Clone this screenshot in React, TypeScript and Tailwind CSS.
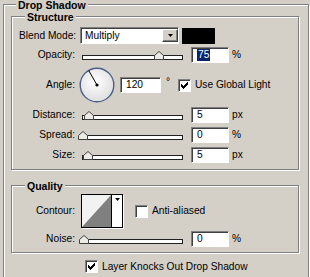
import React from 'react';

const etched = 'border border-[#808080] shadow-[inset_1px_1px_0_#fff,1px_1px_0_#fff]';
const sunken =
  'border border-t-[#808080] border-l-[#808080] border-r-white border-b-white shadow-[inset_1px_1px_0_#404040]';

const Legend = ({ text, ml }: { text: string; ml: string }) => (
  <div className="flex h-[6px]">
    <span className={`-mt-[6px] h-[12px] bg-[#d4d0c8] px-[2px] text-[10.5px] font-bold leading-[12px] ${ml}`}>
      {text}
    </span>
  </div>
);

const Arrow = () => (
  <svg width="5" height="3" viewBox="0 0 5 3">
    <path d="M0 0h5L2.5 3z" fill="#000" />
  </svg>
);

const CheckBox = ({ on }: { on?: boolean }) => (
  <span className={`flex h-[13px] w-[13px] shrink-0 items-center justify-center bg-white ${sunken}`}>
    {on && (
      <svg width="7" height="7" viewBox="0 0 7 7">
        <rect x="6" y="0" width="1" height="1" />
        <rect x="5" y="1" width="2" height="1" />
        <rect x="0" y="2" width="1" height="1" />
        <rect x="4" y="2" width="3" height="1" />
        <rect x="0" y="3" width="2" height="1" />
        <rect x="3" y="3" width="3" height="1" />
        <rect x="0" y="4" width="5" height="1" />
        <rect x="1" y="5" width="3" height="1" />
        <rect x="2" y="6" width="1" height="1" />
      </svg>
    )}
  </span>
);

const Slider = ({ at }: { at: number }) => (
  <div className="relative h-[9px] w-[106px]">
    <div className="absolute bottom-0 left-[4px] right-[1px] h-[5px] border border-[#202020] bg-white" />
    <svg className="absolute top-0" style={{ left: at }} width="10" height="9" viewBox="0 0 10 9">
      <path d="M0.5 8.5V4.5L5 0.5L9.5 4.5V8.5Z" fill="#ecebe6" stroke="#404040" />
    </svg>
  </div>
);

const Field = ({ value, w, selected }: { value: string; w: string; selected?: boolean }) => (
  <div className={`flex h-[16px] items-center bg-white pl-[5px] ${w} ${sunken}`}>
    {selected ? <span className="bg-[#0a246a] px-px text-white">{value}</span> : <span>{value}</span>}
  </div>
);

const SliderRow = ({ label, at, value, unit, mt, selected }: {
  label: string; at: number; value: string; unit: string; mt: string; selected?: boolean;
}) => (
  <div className={`flex items-center ${mt}`}>
    <span className="w-[64px] pr-px text-right">{label}</span>
    <span className="ml-[2px]">
      <Slider at={at} />
    </span>
    <span className="ml-[7px]">
      <Field value={value} w="w-[38px]" selected={selected} />
    </span>
    <span className="ml-[3px]">{unit}</span>
  </div>
);

const Dial = () => (
  <svg width="36" height="36" viewBox="0 0 36 36">
    <defs>
      <radialGradient id="dg" cx="45%" cy="40%" r="60%">
        <stop offset="0%" stopColor="#ffffff" />
        <stop offset="100%" stopColor="#dedede" />
      </radialGradient>
    </defs>
    <circle cx="18" cy="18" r="16.8" fill="url(#dg)" stroke="#4c5d8c" strokeWidth="1.4" />
    <line x1="18" y1="18" x2="9.6" y2="3.4" stroke="#000" strokeWidth="1" />
    <circle cx="18" cy="18" r="1.6" fill="#000" />
  </svg>
);

export default function App() {
  return (
    <div className="h-[277px] w-[310px] overflow-hidden bg-[#d4d0c8] pl-[3px] pt-[4px] font-['Liberation_Sans',Arial,sans-serif] text-[10.2px] leading-[12px] text-black">
      <div className={`flex h-[300px] w-[306px] flex-col ${etched}`}>
        <Legend text="Drop Shadow" ml="ml-[12px]" />

        <div className={`ml-[7px] mt-[5px] flex h-[154px] w-[288px] flex-col ${etched}`}>
          <Legend text="Structure" ml="ml-[13px]" />

          <div className="mt-[4px] flex items-center pl-[7px]">
            <span className="w-[61px]">Blend Mode:</span>
            <div className={`flex h-[17px] w-[99px] items-center justify-between bg-white pl-[4px] ${sunken}`}>
              <span>Multiply</span>
              <span className="flex h-[13px] w-[16px] items-center justify-center border border-t-white border-l-white border-r-[#404040] border-b-[#404040] bg-[#d4d0c8] shadow-[inset_-1px_-1px_0_#808080]">
                <Arrow />
              </span>
            </div>
            <span className="ml-[3px] h-[16px] w-[33px] bg-black" />
          </div>

          <SliderRow label="Opacity:" at={76} value="75" unit="%" mt="mt-[3px]" selected />

          <div className="mt-[4px] flex items-center">
            <span className="w-[64px] pr-px text-right">Angle:</span>
            <span className="ml-[3px] flex">
              <Dial />
            </span>
            <span className="ml-[5px]">
              <Field value="120" w="w-[41px]" />
            </span>
            <span className="ml-[5px] -mt-[6px] w-[12px]">°</span>
            <CheckBox on />
            <span className="ml-[4px]">Use Global Light</span>
          </div>

          <SliderRow label="Distance:" at={6} value="5" unit="px" mt="mt-[4px]" />
          <SliderRow label="Spread:" at={0} value="0" unit="%" mt="mt-[4px]" />
          <SliderRow label="Size:" at={5} value="5" unit="px" mt="mt-[4px]" />
        </div>

        <div className={`ml-[7px] mt-[15px] flex h-[68px] w-[288px] flex-col ${etched}`}>
          <Legend text="Quality" ml="ml-[13px]" />

          <div className="mt-[2px] flex items-center">
            <span className="w-[64px] pr-px text-right">Contour:</span>
            <div className="ml-[5px] flex h-[34px] w-[42px] border border-black bg-white shadow-[1px_1px_0_#fff]">
              <svg width="29" height="32" viewBox="0 0 29 32" className="block">
                <rect width="29" height="32" fill="#f2f2f2" />
                <polygon points="0,32 29,0 29,32" fill="#808080" />
              </svg>
              <span className="w-px bg-black" />
              <span className="flex flex-1 justify-center pt-[3px]">
                <Arrow />
              </span>
            </div>
            <span className="ml-[12px]">
              <CheckBox />
            </span>
            <span className="ml-[4px]">Anti-aliased</span>
          </div>

          <SliderRow label="Noise:" at={1} value="0" unit="%" mt="mt-[3px]" />
        </div>

        <div className="ml-[81px] mt-[7px] flex items-center">
          <CheckBox on />
          <span className="ml-[4px]">Layer Knocks Out Drop Shadow</span>
        </div>
      </div>
    </div>
  );
}
